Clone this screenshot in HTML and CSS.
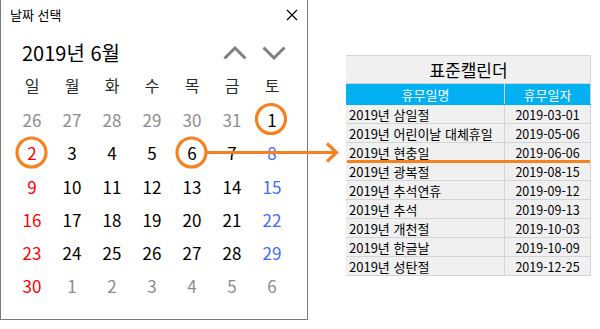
FILE: index.html
```html
<!DOCTYPE html>
<html lang="ko">
<head>
    <meta charset="UTF-8">
    <title>날짜 선택 | 표준캘린더</title>
    <link rel="stylesheet" href="styles.css">
</head>
<body>
    <div class="picker">
        <div class="picker-title">
            <span>날짜 선택</span>
            <svg class="close" width="12" height="12" viewBox="0 0 12 12">
                <path d="M1 1L11 11M11 1L1 11" stroke="#000" stroke-width="1.2" fill="none"/>
            </svg>
        </div>
        <div class="month-bar">
            <span class="month-label">2019년 6월</span>
            <div class="month-nav">
                <svg width="24" height="14" viewBox="0 0 24 14">
                    <path d="M1.5 12.5L12 2L22.5 12.5" stroke="#808080" stroke-width="3" fill="none"/>
                </svg>
                <svg width="24" height="14" viewBox="0 0 24 14">
                    <path d="M1.5 1.5L12 12L22.5 1.5" stroke="#808080" stroke-width="3" fill="none"/>
                </svg>
            </div>
        </div>
        <div class="weekdays">
            <span>일</span><span>월</span><span>화</span><span>수</span><span>목</span><span>금</span><span>토</span>
        </div>
        <div class="days">
            <span class="other">26</span><span class="other">27</span><span class="other">28</span><span class="other">29</span><span class="other">30</span><span class="other">31</span><span>1</span>
            <span class="sun">2</span><span>3</span><span>4</span><span>5</span><span>6</span><span>7</span><span class="sat">8</span>
            <span class="sun">9</span><span>10</span><span>11</span><span>12</span><span>13</span><span>14</span><span class="sat">15</span>
            <span class="sun">16</span><span>17</span><span>18</span><span>19</span><span>20</span><span>21</span><span class="sat">22</span>
            <span class="sun">23</span><span>24</span><span>25</span><span>26</span><span>27</span><span>28</span><span class="sat">29</span>
            <span class="sun">30</span><span class="other">1</span><span class="other">2</span><span class="other">3</span><span class="other">4</span><span class="other">5</span><span class="other">6</span>
        </div>
    </div>

    <table class="holidays">
        <colgroup><col class="col-name"><col class="col-date"></colgroup>
        <tr><th class="table-title" colspan="2">표준캘린더</th></tr>
        <tr class="head"><th>휴무일명</th><th>휴무일자</th></tr>
        <tr><td>2019년 삼일절</td><td>2019-03-01</td></tr>
        <tr><td>2019년 어린이날 대체휴일</td><td>2019-05-06</td></tr>
        <tr><td>2019년 현충일</td><td>2019-06-06</td></tr>
        <tr><td>2019년 광복절</td><td>2019-08-15</td></tr>
        <tr><td>2019년 추석연휴</td><td>2019-09-12</td></tr>
        <tr><td>2019년 추석</td><td>2019-09-13</td></tr>
        <tr><td>2019년 개천절</td><td>2019-10-03</td></tr>
        <tr><td>2019년 한글날</td><td>2019-10-09</td></tr>
        <tr><td>2019년 성탄절</td><td>2019-12-25</td></tr>
    </table>

    <!-- callout marks drawn over both panels -->
    <svg class="marks" width="600" height="329" viewBox="0 0 600 329">
        <g stroke="#f5821f" stroke-width="3.2" fill="none">
            <circle cx="271" cy="119" r="14.5"/>
            <circle cx="31.5" cy="152.5" r="14.5"/>
            <circle cx="191.5" cy="152.5" r="14.5"/>
            <path d="M206 152.5H336"/>
            <path d="M327 143.5L336.5 152.5L327 161.5"/>
            <path d="M347 161.5H590"/>
        </g>
    </svg>
</body>
</html>
```

FILE: styles.css
```css
body {
    margin: 0;
    width: 600px;
    height: 329px;
    position: relative;
    display: flex;
    align-items: flex-start;
    background: #fff;
    font-family: "Noto Sans CJK KR", "Noto Sans", sans-serif;
    color: #000;
    overflow: hidden;
}

.picker {
    box-sizing: border-box;
    width: 308px;
    height: 320px;
    border: 1px solid #7a7a7a;
    border-top: none;
    background: #fff;
}

.picker-title {
    height: 30px;
    padding: 0 9px;
    display: flex;
    align-items: center;
    justify-content: space-between;
    font-size: 13px;
    line-height: 30px;
}

.month-bar {
    height: 34px;
    padding: 6px 21px 0 21px;
    display: flex;
    align-items: center;
    justify-content: space-between;
}

.month-label {
    font-size: 20px;
    line-height: 34px;
}

.month-nav {
    display: flex;
    gap: 15px;
}

.weekdays,
.days {
    display: grid;
    grid-template-columns: repeat(7, 40px);
    padding-left: 11px;
    text-align: center;
}

.weekdays {
    height: 30px;
    margin-bottom: 3px;
    font-size: 16px;
    line-height: 30px;
    color: #2b2b2b;
}

.days {
    grid-auto-rows: 33.3px;
    font-size: 17px;
    line-height: 33.3px;
}

.days .other {
    color: #8c8c8c;
}

.days .sun {
    color: #ff0000;
}

.days .sat {
    color: #3f6cff;
}

.holidays {
    margin: 55px 0 0 38px;
    width: 244px;
    table-layout: fixed;
    border-collapse: collapse;
    font-size: 13px;
}

.col-name {
    width: 158px;
}

.col-date {
    width: 86px;
}

.holidays th,
.holidays td {
    box-sizing: border-box;
    border: 1px solid #d4d4d4;
    padding: 0;
    font-weight: normal;
}

.holidays .table-title {
    height: 28px;
    background: #f0f0f0;
    font-size: 17px;
    line-height: 26px;
    border-left-color: #f0f0f0;
}

.holidays .head th {
    height: 21px;
    line-height: 19px;
    background: #00b0f0;
    color: #fff;
    font-size: 13px;
    border-color: #00b0f0 #d4d4d4 #00b0f0 #00b0f0;
}

.holidays td {
    height: 19px;
    line-height: 17px;
    background: #f0f0f0;
    white-space: nowrap;
}

.holidays td:first-child {
    padding-left: 2px;
    border-left-color: #f0f0f0;
}

.holidays td:last-child {
    text-align: center;
    font-size: 12.5px;
}

.marks {
    position: absolute;
    left: 0;
    top: 0;
    pointer-events: none;
}
```
